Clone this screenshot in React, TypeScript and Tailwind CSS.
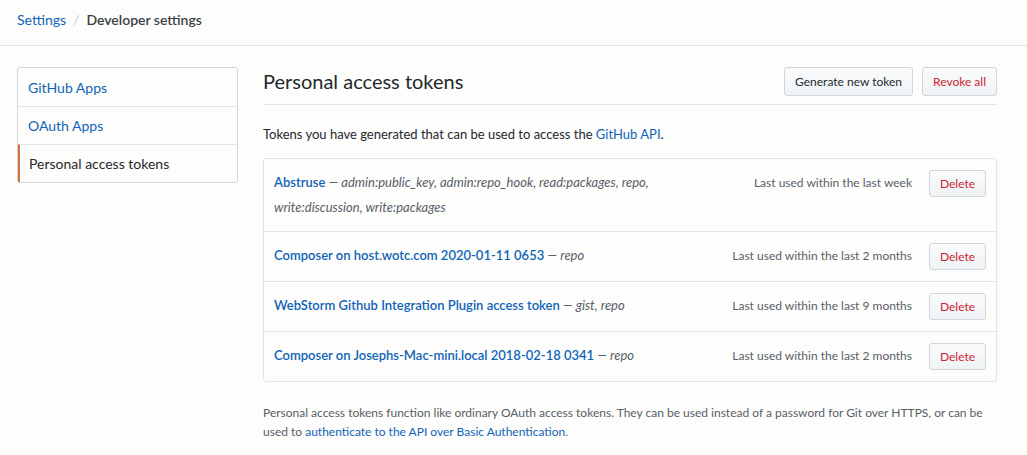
import * as React from "react";

type Token = {
  name: string;
  scopes: string;
  lastUsed: string;
};

const tokens: Token[] = [
  {
    name: "Abstruse",
    scopes:
      "admin:public_key, admin:repo_hook, read:packages, repo, write:discussion, write:packages",
    lastUsed: "Last used within the last week",
  },
  {
    name: "Composer on host.wotc.com 2020-01-11 0653",
    scopes: "repo",
    lastUsed: "Last used within the last 2 months",
  },
  {
    name: "WebStorm Github Integration Plugin access token",
    scopes: "gist, repo",
    lastUsed: "Last used within the last 9 months",
  },
  {
    name: "Composer on Josephs-Mac-mini.local 2018-02-18 0341",
    scopes: "repo",
    lastUsed: "Last used within the last 2 months",
  },
];

const navItems = ["GitHub Apps", "OAuth Apps", "Personal access tokens"];

function Button({
  children,
  danger,
  className = "",
}: {
  children: React.ReactNode;
  danger?: boolean;
  className?: string;
}) {
  return (
    <button
      className={`rounded-[3px] border border-[#d1d5da] bg-gradient-to-b from-[#fafbfc] to-[#eff3f6] text-[12px] ${
        danger ? "text-[#cb2431]" : "text-[#24292e]"
      } ${className}`}
    >
      {children}
    </button>
  );
}

export default function App() {
  return (
    <div
      className="min-h-[455px] bg-[#fdfdfb] text-[#24292e]"
      style={{ fontFamily: "Lato, 'Open Sans', sans-serif" }}
    >
      <div className="flex h-[46px] items-start border-b border-[#e1e4e8] px-[17px] pt-[10px] text-[14px] leading-[20px]">
        <a className="text-[#1064b8]">Settings</a>
        <span className="mx-[7px] text-[#d1d5da]">/</span>
        <span className="font-semibold text-[#3b4148]">Developer settings</span>
      </div>

      <div className="flex gap-[25px] pl-[17px] pr-[30px] pt-[21px]">
        <nav className="w-[221px] shrink-0 self-start rounded-[3px] border border-[#d1d5da] bg-[#fdfdfb]">
          {navItems.map((item, i) => {
            const active = i === navItems.length - 1;
            return (
              <div
                key={item}
                className={`flex h-[38px] items-center text-[14px] ${
                  i > 0 ? "border-t border-[#e1e4e8]" : ""
                } ${
                  active
                    ? "border-l-2 border-l-[#d0703a] pl-[9px] text-[#24292e]"
                    : "pl-[10px] text-[#1064b8]"
                }`}
              >
                {item}
              </div>
            );
          })}
        </nav>

        <main className="min-w-0 flex-1">
          <div className="flex items-center justify-between border-b border-[#e1e4e8] pb-[8px]">
            <h2 className="text-[20px] font-normal leading-[29px] text-[#24292e]">
              Personal access tokens
            </h2>
            <div className="flex gap-[9px]">
              <Button className="h-[29px] px-[10px]">Generate new token</Button>
              <Button danger className="h-[29px] px-[10px]">
                Revoke all
              </Button>
            </div>
          </div>

          <p className="mt-[19px] text-[13px] leading-[20px]">
            Tokens you have generated that can be used to access the{" "}
            <a className="text-[#1064b8]">GitHub API</a>.
          </p>

          <div className="mt-[14px] rounded-[3px] border border-[#e1e4e8]">
            {tokens.map((t, i) => (
              <div
                key={t.name}
                className={`flex items-start gap-[17px] py-[11px] pl-[10px] pr-[10px] ${
                  i > 0 ? "border-t border-[#e1e4e8]" : ""
                }`}
              >
                <div className="min-w-0 flex-1 text-[13px] leading-[25px]">
                  <a className="font-semibold text-[#1064b8]">{t.name}</a>{" "}
                  <span className="italic text-[#586069]">— {t.scopes}</span>
                </div>
                <div className="shrink-0 text-[12px] leading-[25px] text-[#586069]">
                  {t.lastUsed}
                </div>
                <Button danger className="h-[27px] w-[57px] shrink-0">
                  Delete
                </Button>
              </div>
            ))}
          </div>

          <p className="mt-[21px] text-[12px] leading-[19px] text-[#586069]">
            Personal access tokens function like ordinary OAuth access tokens. They can be used
            instead of a password for Git over HTTPS, or can be used to{" "}
            <a className="text-[#1064b8]">authenticate to the API over Basic Authentication</a>.
          </p>
        </main>
      </div>
    </div>
  );
}
